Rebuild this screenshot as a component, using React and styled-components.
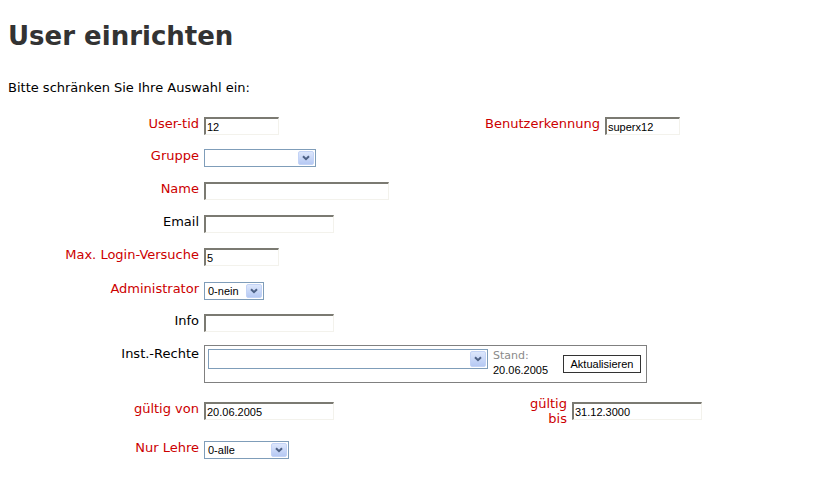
import React from 'react';
import styled, { createGlobalStyle } from 'styled-components';

const GlobalStyle = createGlobalStyle`
  body {
    margin: 8px;
    background: #fff;
    font-family: "DejaVu Sans", Verdana, sans-serif;
    font-size: 13px;
    color: #000;
  }
`;

const Title = styled.h1`
  margin: 13px 0 0;
  font-size: 26px;
  line-height: 30px;
  font-weight: bold;
  color: #333;
`;

const Intro = styled.p`
  margin: 29px 0 0;
  font-size: 13px;
  line-height: 15px;
  color: #000;
`;

const Form = styled.div`
  margin-top: 22px;
  display: flex;
  flex-direction: column;
`;

const Row = styled.div`
  display: grid;
  grid-template-columns: ${p => p.cols || '192px 1fr'};
  column-gap: 4px;
  align-items: start;
  margin-top: ${p => p.mt ?? 14}px;
  &:first-child { margin-top: 0; }
`;

const Label = styled.label`
  margin-top: ${p => p.mt ?? 0}px;
  text-align: right;
  padding-right: 1px;
  white-space: ${p => (p.wrap ? 'normal' : 'nowrap')};
  font-size: 13px;
  line-height: ${p => (p.wrap ? 15 : 14)}px;
  color: ${p => (p.required ? '#cc0000' : '#000')};
`;

const Input = styled.input`
  box-sizing: border-box;
  width: ${p => p.w}px;
  height: 18px;
  margin: 0;
  padding: 1px 1px 0;
  border-style: solid;
  border-width: 2px 1px 1px 2px;
  border-color: #7b7a72 #f3f2ec #f3f2ec #7b7a72;
  background: #fff;
  font-family: "Liberation Sans", Arial, sans-serif;
  font-size: 11px;
  color: #000;
  outline: none;
`;

const SelectBox = styled.div`
  box-sizing: border-box;
  width: ${p => p.w}px;
  height: ${p => p.h || 18}px;
  border: 1px solid #7f9db9;
  background: #fff;
  display: flex;
  align-items: center;
  justify-content: space-between;
  padding: 0 1px 0 3px;
  font-family: "Liberation Sans", Arial, sans-serif;
  font-size: 11px;
`;

const DropButton = styled.span`
  box-sizing: border-box;
  width: 16px;
  height: ${p => p.h || 14}px;
  border: 1px solid #c3d3f6;
  border-radius: 2px;
  background: linear-gradient(#dde7fc, #b6c9f3);
  display: flex;
  align-items: center;
  justify-content: center;
`;

const Select = ({ w, h, value }) => (
  <SelectBox w={w} h={h}>
    <span>{value}</span>
    <DropButton h={h ? h - 4 : 14}>
      <svg width="8" height="6" viewBox="0 0 8 6">
        <polyline points="1,1.2 4,4.2 7,1.2" fill="none" stroke="#4d6185" strokeWidth="2" />
      </svg>
    </DropButton>
  </SelectBox>
);

const RightsBox = styled.div`
  box-sizing: border-box;
  width: 443px;
  height: 38px;
  border: 1px solid #808080;
  padding: 3px;
  display: grid;
  grid-template-columns: 280px 1fr auto;
  column-gap: 5px;
  align-items: start;
`;

const Stand = styled.div`
  display: flex;
  flex-direction: column;
  line-height: 14px;
`;

const StandLabel = styled.span`
  font-size: 11px;
  color: #8a8a8a;
`;

const StandDate = styled.span`
  font-family: "Liberation Sans", Arial, sans-serif;
  font-size: 11px;
  color: #000;
`;

const RefreshButton = styled.button`
  align-self: center;
  box-sizing: border-box;
  width: 78px;
  height: 18px;
  margin: 0 2px 0 0;
  padding: 0;
  border: 1px solid #333;
  background: #fff;
  font-family: "Liberation Sans", Arial, sans-serif;
  font-size: 11px;
  color: #000;
`;

export default function App() {
  return (
    <>
      <GlobalStyle />
      <Title>User einrichten</Title>
      <Intro>Bitte schränken Sie Ihre Auswahl ein:</Intro>
      <Form>
        <Row cols="192px 270px 123px 1fr">
          <Label required>User-tid</Label>
          <Input w={75} defaultValue="12" />
          <Label required>Benutzerkennung</Label>
          <Input w={75} defaultValue="superx12" />
        </Row>
        <Row>
          <Label required>Gruppe</Label>
          <Select w={112} value="" />
        </Row>
        <Row mt={15}>
          <Label required>Name</Label>
          <Input w={185} />
        </Row>
        <Row mt={15}>
          <Label>Email</Label>
          <Input w={130} />
        </Row>
        <Row mt={15}>
          <Label required>Max. Login-Versuche</Label>
          <Input w={75} defaultValue="5" />
        </Row>
        <Row mt={16}>
          <Label required>Administrator</Label>
          <Select w={60} value="0-nein" />
        </Row>
        <Row mt={14}>
          <Label>Info</Label>
          <Input w={130} />
        </Row>
        <Row mt={13}>
          <Label mt={2}>Inst.-Rechte</Label>
          <RightsBox>
            <Select w={280} h={20} value="" />
            <Stand>
              <StandLabel>Stand:</StandLabel>
              <StandDate>20.06.2005</StandDate>
            </Stand>
            <RefreshButton>Aktualisieren</RefreshButton>
          </RightsBox>
        </Row>
        <Row cols="192px 321px 39px 1fr" mt={19}>
          <Label required>gültig von</Label>
          <Input w={130} defaultValue="20.06.2005" />
          <Label required wrap mt={-6}>gültig bis</Label>
          <Input w={130} defaultValue="31.12.3000" />
        </Row>
        <Row mt={15}>
          <Label required>Nur Lehre</Label>
          <Select w={85} value="0-alle" />
        </Row>
      </Form>
    </>
  );
}
